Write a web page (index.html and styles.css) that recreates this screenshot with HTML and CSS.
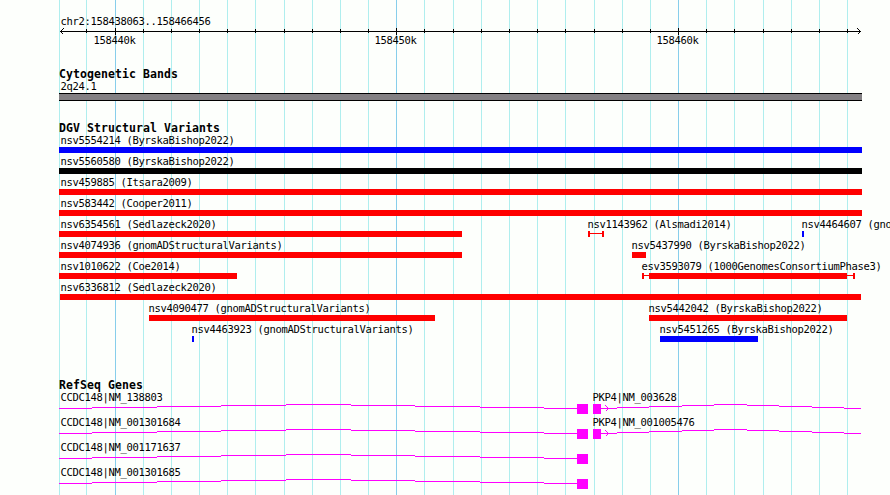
FILE: index.html
```
<!DOCTYPE html>
<html lang="en">
<head>
  <meta charset="UTF-8" />
  <title>chr2:158438063..158466456</title>
  <link rel="stylesheet" href="styles.css">
</head>
<body>
<main class="browser">
  <!-- grid lines behind every track -->
  <svg class="gridlines" width="890" height="495">
    <path class="minor" d="M59.5 0v495M86.5 0v495M143.5 0v495M171.5 0v495M199.5 0v495M227.5 0v495M255.5 0v495M284.5 0v495M312.5 0v495M340.5 0v495M368.5 0v495M424.5 0v495M453.5 0v495M481.5 0v495M509.5 0v495M537.5 0v495M565.5 0v495M594.5 0v495M622.5 0v495M650.5 0v495M706.5 0v495M734.5 0v495M763.5 0v495M791.5 0v495M819.5 0v495M847.5 0v495"/>
    <path class="major" d="M115.5 0v495M396.5 0v495M678.5 0v495"/>
  </svg>

  <section class="track">
    <svg class="ruler" width="890" height="66">
      <text x="60" y="25">chr2:158438063..158466456</text>
      <path d="M60 31.5H861"/>
      <path d="M86.5 29v4M143.5 29v4M171.5 29v4M199.5 29v4M227.5 29v4M255.5 29v4M284.5 29v4M312.5 29v4M340.5 29v4M368.5 29v4M424.5 29v4M453.5 29v4M481.5 29v4M509.5 29v4M537.5 29v4M565.5 29v4M594.5 29v4M622.5 29v4M650.5 29v4M706.5 29v4M734.5 29v4M763.5 29v4M791.5 29v4M819.5 29v4M847.5 29v4"/>
      <path d="M115.5 28v7M396.5 28v7M678.5 28v7"/>
      <path d="M63.5 28.5l-3 3l3 3M857.5 28.5l3 3l-3 3"/>
      <text x="93" y="44">158440k</text>
      <text x="374" y="44">158450k</text>
      <text x="656" y="44">158460k</text>
    </svg>
  </section>

  <section class="track">
    <h2>Cytogenetic Bands</h2>
    <svg width="890" height="38">
      <text x="60" y="8">2q24.1</text>
      <rect x="59" y="11" width="803" height="8"/>
      <rect class="band" x="59" y="12" width="803" height="6"/>
    </svg>
  </section>

  <section class="track">
    <h2>DGV Structural Variants</h2>
    <svg width="890" height="241">
      <g>
        <text x="60" y="8">nsv5554214 (ByrskaBishop2022)</text>
        <rect class="gain" x="59" y="11" width="803" height="6"/>
      </g>
      <g transform="translate(0 21)">
        <text x="60" y="8">nsv5560580 (ByrskaBishop2022)</text>
        <rect x="59" y="11" width="803" height="6"/>
      </g>
      <g transform="translate(0 42)">
        <text x="60" y="8">nsv459885 (Itsara2009)</text>
        <rect class="loss" x="59" y="11" width="803" height="6"/>
      </g>
      <g transform="translate(0 63)">
        <text x="60" y="8">nsv583442 (Cooper2011)</text>
        <rect class="loss" x="59" y="11" width="803" height="6"/>
      </g>
      <g transform="translate(0 84)">
        <text x="60" y="8">nsv6354561 (Sedlazeck2020)</text>
        <rect class="loss" x="59" y="11" width="403" height="6"/>
        <text x="587" y="8">nsv1143962 (Alsmadi2014)</text>
        <path class="loss" d="M588 11h2v2h12v-2h2v6h-2v-3h-12v3h-2z"/>
        <text x="801" y="8">nsv4464607 (gnomADStructuralVariants)</text>
        <rect class="gain" x="802" y="11" width="2" height="6"/>
      </g>
      <g transform="translate(0 105)">
        <text x="60" y="8">nsv4074936 (gnomADStructuralVariants)</text>
        <rect class="loss" x="59" y="11" width="403" height="6"/>
        <text x="631" y="8">nsv5437990 (ByrskaBishop2022)</text>
        <rect class="loss" x="632" y="11" width="14" height="6"/>
      </g>
      <g transform="translate(0 126)">
        <text x="60" y="8">nsv1010622 (Coe2014)</text>
        <rect class="loss" x="59" y="11" width="178" height="6"/>
        <text x="641" y="8">esv3593079 (1000GenomesConsortiumPhase3)</text>
        <path class="loss" d="M642 11h2v2h209v-2h2v6h-2v-3h-209v3h-2z"/>
        <rect class="loss" x="649" y="11" width="198" height="6"/>
      </g>
      <g transform="translate(0 147)">
        <text x="60" y="8">nsv6336812 (Sedlazeck2020)</text>
        <rect class="loss" x="60" y="11" width="801" height="6"/>
      </g>
      <g transform="translate(0 168)">
        <text x="148" y="8">nsv4090477 (gnomADStructuralVariants)</text>
        <rect class="loss" x="149" y="11" width="286" height="6"/>
        <text x="648" y="8">nsv5442042 (ByrskaBishop2022)</text>
        <rect class="loss" x="649" y="11" width="198" height="6"/>
      </g>
      <g transform="translate(0 189)">
        <text x="191" y="8">nsv4463923 (gnomADStructuralVariants)</text>
        <rect class="gain" x="192" y="11" width="2" height="6"/>
        <text x="659" y="8">nsv5451265 (ByrskaBishop2022)</text>
        <rect class="gain" x="660" y="11" width="98" height="6"/>
      </g>
    </svg>
  </section>

  <section class="track">
    <h2>RefSeq Genes</h2>
    <svg width="890" height="102">
      <defs>
        <g id="ccdc148">
          <path class="intron" d="M59 15.5h33m0-1h65m0-1h64m0-1h65m0-1h65m0 1h64m0 1h65m0 1h64m0 1h33"/>
          <rect class="exon" x="577" y="11" width="11" height="10"/>
        </g>
        <g id="pkp4">
          <path class="intron" d="M601 15.5h16m0-1h32m0-1h33m0-1h32m0-1h33m0 1h32m0 1h33m0 1h32m0 1h17"/>
          <path class="intron" d="M605.5 12.5l3 3l-3 3"/>
          <rect class="exon" x="593" y="11" width="8" height="10"/>
        </g>
      </defs>
      <g>
        <text x="60" y="8">CCDC148|NM_138803</text>
        <use href="#ccdc148"/>
        <text x="592" y="8">PKP4|NM_003628</text>
        <use href="#pkp4"/>
      </g>
      <g transform="translate(0 25)">
        <text x="60" y="8">CCDC148|NM_001301684</text>
        <use href="#ccdc148"/>
        <text x="592" y="8">PKP4|NM_001005476</text>
        <use href="#pkp4"/>
      </g>
      <g transform="translate(0 50)">
        <text x="60" y="8">CCDC148|NM_001171637</text>
        <use href="#ccdc148"/>
      </g>
      <g transform="translate(0 75)">
        <text x="60" y="8">CCDC148|NM_001301685</text>
        <use href="#ccdc148"/>
      </g>
    </svg>
  </section>
</main>
</body>
</html>
```
FILE: styles.css
```
body {
  margin: 0;
  background-color: #fdfffc;
  overflow: hidden;
}
.browser {
  position: relative;
  width: 890px;
  height: 495px;
  overflow: hidden;
}
.gridlines {
  position: absolute;
  top: 0;
  left: 0;
}
.minor {
  stroke: #afeeee;
}
.major {
  stroke: #87ceeb;
}
.track {
  position: relative;
}
svg {
  display: block;
  overflow: visible;
  shape-rendering: crispEdges;
}
h2 {
  margin: 0;
  padding-left: 59px;
  height: 16px;
  font: bold 11.5px/16px "DejaVu Sans Mono", monospace;
  letter-spacing: 0.077px;
  color: #000;
}
text {
  font: 10.5px "DejaVu Sans Mono", monospace;
  letter-spacing: -0.321px;
  fill: #000;
  transform: translateX(0.5px);
}
.ruler path {
  fill: none;
  stroke: #000;
}
.band {
  fill: #838083;
}
.gain {
  fill: #00f;
}
.loss {
  fill: #f00;
}
.intron {
  fill: none;
  stroke: #f0f;
}
.exon {
  fill: #f0f;
}
```
